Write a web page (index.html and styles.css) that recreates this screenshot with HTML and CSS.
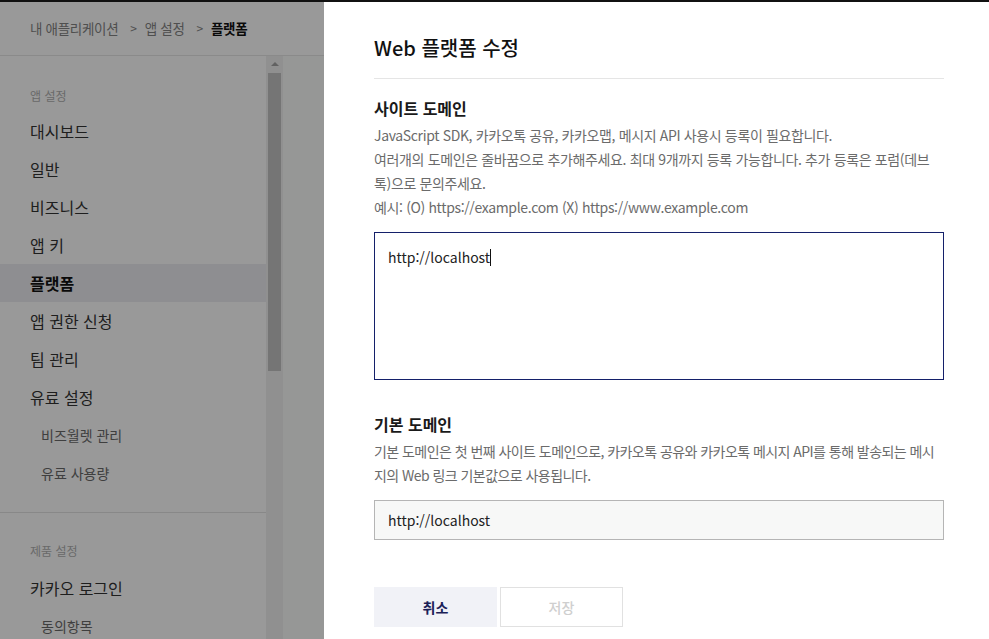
FILE: index.html
```html
<!DOCTYPE html>
<html lang="ko">
<head>
<meta charset="utf-8">
<title>Web 플랫폼 수정</title>
<link rel="stylesheet" href="styles.css">
</head>
<body>
<div class="topline"></div>
<div class="app">
  <header class="crumbs">
    <span>내 애플리케이션</span><span class="sep">&gt;</span><span>앱 설정</span><span class="sep">&gt;</span><strong>플랫폼</strong>
  </header>
  <div class="body">
    <nav class="side">
      <div class="group">
        <div class="label">앱 설정</div>
        <a class="item">대시보드</a>
        <a class="item">일반</a>
        <a class="item">비즈니스</a>
        <a class="item">앱 키</a>
        <a class="item active">플랫폼</a>
        <a class="item">앱 권한 신청</a>
        <a class="item">팀 관리</a>
        <a class="item">유료 설정</a>
        <a class="sub">비즈월렛 관리</a>
        <a class="sub">유료 사용량</a>
      </div>
      <div class="group second">
        <div class="label">제품 설정</div>
        <a class="item">카카오 로그인</a>
        <a class="sub">동의항목</a>
      </div>
    </nav>
    <div class="scrollbar">
      <div class="arrow"></div>
      <div class="thumb"></div>
    </div>
    <main class="main">
      <div class="card-edge"></div>
    </main>
  </div>
</div>

<div class="overlay"></div>

<aside class="drawer">
  <h1 class="title">Web 플랫폼 수정</h1>
  <section class="field">
    <h2>사이트 도메인</h2>
    <p class="desc">JavaScript SDK, 카카오톡 공유, 카카오맵, 메시지 API 사용시 등록이 필요합니다.<br>여러개의 도메인은 줄바꿈으로 추가해주세요. 최대 9개까지 등록 가능합니다. 추가 등록은 포럼(데브톡)으로 문의주세요.<br>예시: (O) https://example.com (X) https://www.example.com</p>
    <div class="textarea">http://localhost<span class="caret"></span></div>
  </section>
  <section class="field base">
    <h2>기본 도메인</h2>
    <p class="desc tight">기본 도메인은 첫 번째 사이트 도메인으로, 카카오톡 공유와 카카오톡 메시지 API를 통해 발송되는 메시지의 Web 링크 기본값으로 사용됩니다.</p>
    <div class="input">http://localhost</div>
  </section>
  <div class="actions">
    <button class="btn cancel">취소</button>
    <button class="btn save">저장</button>
  </div>
</aside>
</body>
</html>
```
FILE: styles.css
```css
* { box-sizing: border-box; }
html, body { margin: 0; height: 100%; overflow: hidden; }
body {
  font-family: "Noto Sans CJK KR", "Noto Sans", sans-serif;
  background: #fff;
  color: #222;
}
.topline { height: 2px; background: #111; position: relative; z-index: 30; }

.app { display: flex; flex-direction: column; height: calc(100% - 2px); }
.crumbs {
  height: 54px;
  border-bottom: 1px solid #e6e6e6;
  display: flex;
  align-items: center;
  padding: 0 30px 2px;
  font-size: 13.5px;
  letter-spacing: -0.3px;
  color: #848484;
}
.crumbs .sep { margin: 0 8px 0 12px; font-size: 12px; }
.crumbs strong { color: #111; font-weight: 700; }

.body { display: flex; flex: 1; min-height: 0; }
.side { width: 266px; flex: none; }
.group { padding: 31px 0 20px; border-bottom: 1px solid #e3e3e3; }
.group.second { padding-top: 29px; border-bottom: 0; }
.label { font-size: 12px; line-height: 18px; color: #b0b0b0; padding-left: 30px; margin-bottom: 7px; }
.second .label { margin-bottom: 9px; }
.item, .sub { display: block; height: 38px; line-height: 38px; padding-left: 30px; }
.item { font-size: 16px; color: #333; }
.sub { font-size: 14px; color: #6a6a6a; padding-left: 41px; }
.item.active { background: #ededf2; font-weight: 700; color: #111; }

.scrollbar { width: 17px; flex: none; background: #f1f1f1; display: flex; flex-direction: column; align-items: center; }
.arrow {
  margin-top: 6px;
  width: 0; height: 0;
  border-left: 4px solid transparent;
  border-right: 4px solid transparent;
  border-bottom: 4px solid #a3a3a3;
}
.thumb { margin-top: 7px; width: 13px; height: 298px; background: #c3c3c3; }

.main { flex: 1; background: #fbfcfb; display: flex; justify-content: flex-end; }
.card-edge { width: 8px; background: #f4f4f4; }

.overlay { position: fixed; inset: 0; background: rgba(0, 0, 0, 0.4); z-index: 10; }

.drawer {
  position: fixed;
  top: 2px; right: 0; bottom: 0;
  width: 665px;
  background: #fff;
  z-index: 20;
  padding: 32px 45px 0 50px;
}
.title {
  margin: 0;
  font-size: 20px;
  line-height: 28px;
  font-weight: 500;
  color: #111;
  padding-bottom: 16px;
  border-bottom: 1px solid #e5e5e5;
}
.field h2 { margin: 0 0 3px; font-size: 16px; line-height: 24px; font-weight: 700; color: #1a1a1a; }
.field { padding-top: 17px; }
.field.base { padding-top: 32px; }
.desc { margin: 0; font-size: 14px; line-height: 24px; color: #6b6b6b; letter-spacing: -0.36px; }
.desc.tight { letter-spacing: -0.55px; }
.textarea {
  margin-top: 13px;
  height: 148px;
  border: 1px solid #14206a;
  padding: 13px 13px;
  font-size: 14px;
  line-height: 22px;
  color: #222;
}
.caret { display: inline-block; width: 1px; height: 17px; background: #111; vertical-align: -3px; }
.input {
  margin-top: 13px;
  height: 40px;
  border: 1px solid #b5b5b5;
  background: #f7f8f7;
  padding: 0 13px;
  display: flex;
  align-items: center;
  font-size: 14px;
  color: #222;
}
.actions { display: flex; gap: 3px; margin-top: 47px; }
.btn {
  width: 123px;
  height: 40px;
  font-family: inherit;
  font-size: 14px;
  font-weight: 700;
  border: 0;
  padding: 0;
}
.cancel { background: #f1f2f7; color: #1b2157; }
.save { background: #fff; border: 1px solid #e1e1e1; color: #cfcfcf; font-weight: 500; }
```
